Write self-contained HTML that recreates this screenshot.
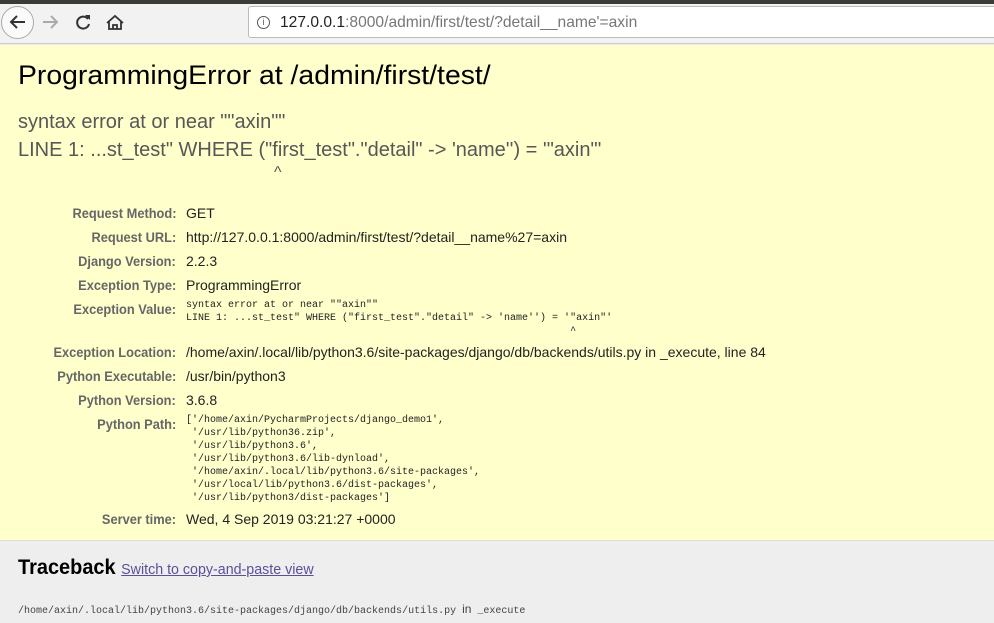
<!DOCTYPE html>
<html><head><meta charset="utf-8"><style>
*{margin:0;padding:0;box-sizing:border-box}
body{width:994px;height:623px;overflow:hidden;background:#eee;font-family:"Liberation Sans",sans-serif;position:relative}
.a{position:absolute;white-space:nowrap}
.s{display:inline-block;transform-origin:left center}
.lab{position:absolute;right:818px;white-space:nowrap;font-weight:bold;color:#666;font-size:13.5px;transform:scaleX(.95);transform-origin:right center}
.val{position:absolute;left:186px;white-space:nowrap;color:#222;font-size:14px;transform:scaleX(1.0);transform-origin:left center}
.mono{position:absolute;left:186px;font-family:"Liberation Mono",monospace;font-size:10px;line-height:13px;white-space:pre;color:#222}
</style></head><body>
<div class="a" style="left:0;top:0;width:994px;height:4px;background:#3c3b37"></div>
<div class="a" style="left:0;top:4px;width:994px;height:40px;background:#f2f2f2;border-bottom:1px solid #ccc"></div>
<div class="a" style="left:1px;top:6px;width:33px;height:33px;border:1px solid #aaa;border-radius:50%;background:#fafafa"></div>
<svg class="a" style="left:0;top:0" width="240" height="44">
<path d="M25 22H11M17 16l-6 6 6 6" stroke="#333" stroke-width="2" fill="none"/>
<path d="M56 22H43M51 16l6 6-6 6" stroke="#aaa" stroke-width="2" fill="none"/>
<path d="M88 19a6 6 0 1 0 1 5" stroke="#333" stroke-width="2" fill="none"/><path d="M85 15l5 0 0 5z" fill="#333"/>
<path d="M107 23l8-7 8 7M109 21v8h12v-8M113 29v-4h4v4" stroke="#333" stroke-width="1.8" fill="none"/>
</svg>
<div class="a" style="left:248px;top:6px;width:760px;height:32px;background:#fff;border:1px solid #bbb;border-radius:3px"></div>
<div class="a" style="left:257px;top:16px;width:13px;height:13px;border:1.3px solid #555;border-radius:50%;font-size:9px;line-height:10px;text-align:center;color:#555">i</div>
<div class="a" style="left:280px;top:14px;font-size:16px"><span class="s" style="transform:scaleX(.975)"><span style="color:#222">127.0.0.1</span><span style="color:#777">:8000/admin/first/test/?detail__name'=axin</span></span></div>
<div class="a" style="left:0;top:45px;width:994px;height:496px;background:#ffc;border-bottom:1px solid #ddd"></div>
<div class="a" style="left:18px;top:60px;font-size:27px;color:#000"><span class="s" style="transform:scaleX(1.05)">ProgrammingError at /admin/first/test/</span></div>
<div class="a" style="left:18px;top:108px;font-size:20px;color:#575757;line-height:28px"><span class="s" style="transform:scaleX(1.0)">syntax error at or near ""axin""<br>LINE 1: ...st_test" WHERE ("first_test"."detail" -&gt; 'name'') = '"axin"'</span></div>
<div class="a" style="left:274px;top:164px;font-size:16px;color:#575757">^</div>
<div class="lab" style="top:206px">Request Method:</div><div class="val" style="top:205px">GET</div>
<div class="lab" style="top:230px">Request URL:</div><div class="val" style="top:229px">http://127.0.0.1:8000/admin/first/test/?detail__name%27=axin</div>
<div class="lab" style="top:254px">Django Version:</div><div class="val" style="top:253px">2.2.3</div>
<div class="lab" style="top:278px">Exception Type:</div><div class="val" style="top:277px">ProgrammingError</div>
<div class="lab" style="top:302px">Exception Value:</div>
<div class="mono" style="top:299px">syntax error at or near ""axin""
LINE 1: ...st_test" WHERE ("first_test"."detail" -&gt; 'name'') = '"axin"'
                                                                ^</div>
<div class="lab" style="top:345px">Exception Location:</div><div class="val" style="top:344px">/home/axin/.local/lib/python3.6/site-packages/django/db/backends/utils.py in _execute, line 84</div>
<div class="lab" style="top:369px">Python Executable:</div><div class="val" style="top:368px">/usr/bin/python3</div>
<div class="lab" style="top:393px">Python Version:</div><div class="val" style="top:392px">3.6.8</div>
<div class="lab" style="top:417px">Python Path:</div>
<div class="mono" style="top:414px">['/home/axin/PycharmProjects/django_demo1',
 '/usr/lib/python36.zip',
 '/usr/lib/python3.6',
 '/usr/lib/python3.6/lib-dynload',
 '/home/axin/.local/lib/python3.6/site-packages',
 '/usr/local/lib/python3.6/dist-packages',
 '/usr/lib/python3/dist-packages']</div>
<div class="lab" style="top:512px">Server time:</div><div class="val" style="top:511px">Wed, 4 Sep 2019 03:21:27 +0000</div>
<div class="a" style="left:18px;top:556px;font-size:21px;font-weight:bold;color:#000"><span class="s" style="transform:scaleX(.95)">Traceback <span style="font-weight:normal;font-size:15px;color:#5b4f9a;text-decoration:underline">Switch to copy-and-paste view</span></span></div>
<div class="a" style="left:18px;top:602px;font-family:'Liberation Mono',monospace;font-size:10px;color:#444">/home/axin/.local/lib/python3.6/site-packages/django/db/backends/utils.py <span style="font-family:'Liberation Sans';font-size:12px">in</span> _execute</div>
</body></html>
